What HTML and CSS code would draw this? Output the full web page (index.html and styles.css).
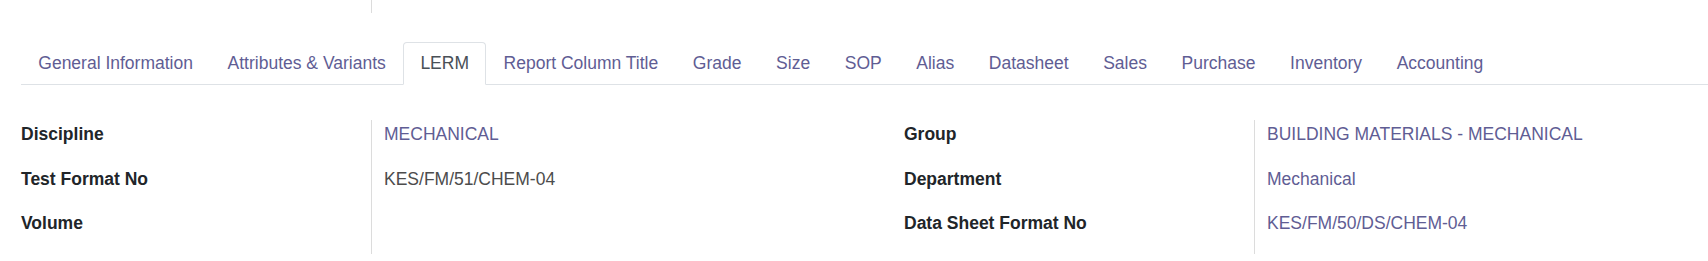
FILE: index.html
```html
<!DOCTYPE html>
<html>
<head>
<meta charset="utf-8">
<link rel="stylesheet" href="styles.css">
</head>
<body>
<div class="sheet">
  <div class="prev-row"><div class="prev-label"></div><div class="prev-value"></div></div>
  <ul class="tabs">
    <li class="tab">General Information</li>
    <li class="tab">Attributes &amp; Variants</li>
    <li class="tab active">LERM</li>
    <li class="tab">Report Column Title</li>
    <li class="tab">Grade</li>
    <li class="tab">Size</li>
    <li class="tab">SOP</li>
    <li class="tab">Alias</li>
    <li class="tab">Datasheet</li>
    <li class="tab">Sales</li>
    <li class="tab">Purchase</li>
    <li class="tab">Inventory</li>
    <li class="tab">Accounting</li>
  </ul>
  <div class="fields">
    <div class="label">Discipline</div>
    <div class="value link">MECHANICAL</div>
    <div class="label">Group</div>
    <div class="value link">BUILDING MATERIALS - MECHANICAL</div>

    <div class="label">Test Format No</div>
    <div class="value">KES/FM/51/CHEM-04</div>
    <div class="label">Department</div>
    <div class="value link">Mechanical</div>

    <div class="label">Volume</div>
    <div class="value"></div>
    <div class="label">Data Sheet Format No</div>
    <div class="value link">KES/FM/50/DS/CHEM-04</div>
  </div>
</div>
</body>
</html>
```

FILE: styles.css
```css
html, body {
  margin: 0;
  padding: 0;
  background: #ffffff;
}
body {
  width: 1708px;
  height: 261px;
  overflow: hidden;
  font-family: "Liberation Sans", Arial, sans-serif;
  font-size: 17.5px;
}
.sheet {
  padding-left: 21px;
}
.prev-row {
  display: flex;
  height: 13px;
}
.prev-label {
  width: 350px;
}
.prev-value {
  border-left: 1px solid #dcdcdc;
}
.tabs {
  list-style: none;
  margin: 29px 0 0 0;
  padding: 0;
  display: flex;
  border-bottom: 1px solid #dee2e6;
}
.tab {
  margin-bottom: -1px;
  padding: 8px 16.3px;
  line-height: 25px;
  border: 1px solid transparent;
  border-radius: 4px 4px 0 0;
  color: #5f5d94;
  white-space: nowrap;
}
.tab.active {
  color: #495057;
  background: #ffffff;
  border-color: #dee2e6 #dee2e6 #ffffff;
}
.fields {
  margin-top: 35px;
  display: grid;
  grid-template-columns: 350px 533px 350px 1fr;
}
.label, .value {
  line-height: 26px;
  padding: 1px 0 17.6px;
  white-space: nowrap;
}
.label {
  font-weight: bold;
  color: #212529;
}
.value {
  border-left: 1px solid #dcdcdc;
  padding-left: 12px;
  color: #4c4c4c;
}
.value.link {
  color: #5f5d94;
}
```
